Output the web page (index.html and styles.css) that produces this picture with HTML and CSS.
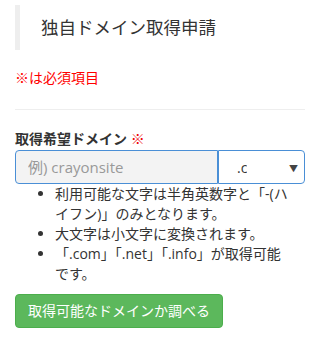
FILE: index.html
```html
<!DOCTYPE html>
<html lang="ja">
<head>
    <meta charset="UTF-8">
    <meta name="viewport" content="width=device-width, initial-scale=1.0">
    <link rel="stylesheet" href="styles.css">
    <title>独自ドメイン取得申請</title>
</head>
<body>
    <div id="page">
        <h3 class="page-title">独自ドメイン取得申請</h3>
        <p class="required-note">※は必須項目</p>
        <hr>
        <div class="form-group">
            <label class="field-label">取得希望ドメイン <span class="mark">※</span></label>
            <div class="input-group">
                <input type="text" class="domain-input" placeholder="例) crayonsite">
                <div class="tld-select">
                    <span class="tld-value">.com</span>
                    <span class="caret">▼</span>
                </div>
            </div>
            <ul class="help-list">
                <li>利用可能な文字は半角英数字と「-(ハイフン)」のみとなります。</li>
                <li>大文字は小文字に変換されます。</li>
                <li>「.com」「.net」「.info」が取得可能です。</li>
            </ul>
        </div>
        <button class="btn-check">取得可能なドメインか調べる</button>
    </div>
</body>
</html>
```

FILE: styles.css
```css
body {
    margin: 0;
    font-family: 'Open Sans', 'Noto Sans CJK JP', sans-serif;
    font-size: 14px;
    line-height: 20px;
    color: #333;
    background-color: #fff;
}

#page {
    padding: 5px 15px;
}

.page-title {
    margin: 0;
    padding: 10px 21px;
    border-left: 5px solid #eee;
    font-size: 17.5px;
    font-weight: normal;
    line-height: 25px;
}

.required-note {
    margin: 18px 0 0;
    color: #f00;
}

hr {
    margin: 21px 0 19px;
    border: 0;
    border-top: 1px solid #eee;
}

.field-label {
    display: block;
    margin-bottom: 1px;
    font-weight: bold;
}

.mark {
    color: #e00;
}

.input-group {
    display: flex;
    height: 34px;
}

.domain-input {
    flex: 1;
    min-width: 0;
    box-sizing: border-box;
    height: 34px;
    margin: 0;
    padding: 6px 12px;
    border: 1px solid #4a8fd6;
    border-radius: 4px 0 0 4px;
    background-color: #f3f3f3;
    font-family: 'Open Sans', 'Noto Sans CJK JP', sans-serif;
    font-size: 15px;
    color: #333;
    outline: none;
}

.domain-input::placeholder {
    color: #999;
}

.tld-select {
    position: relative;
    box-sizing: border-box;
    width: 87px;
    height: 34px;
    padding: 7px 0 0 18px;
    border: 1px solid #4a8fd6;
    border-radius: 0 4px 4px 0;
    background-color: #fff;
}

.tld-value {
    display: inline-block;
    width: 10px;
    overflow: hidden;
    white-space: nowrap;
    vertical-align: top;
    font-size: 14px;
}

.caret {
    position: absolute;
    right: 6px;
    top: 8px;
    font-size: 9px;
    color: #444;
}

.help-list {
    margin: 0 0 10px;
    padding: 0 13px 0 40px;
}

.btn-check {
    display: inline-block;
    padding: 6px 12px;
    border: 1px solid #4cae4c;
    border-radius: 4px;
    background-color: #5cb85c;
    color: #fff;
    font-family: 'Open Sans', 'Noto Sans CJK JP', sans-serif;
    font-size: 14px;
    line-height: 20px;
    cursor: pointer;
}
```
